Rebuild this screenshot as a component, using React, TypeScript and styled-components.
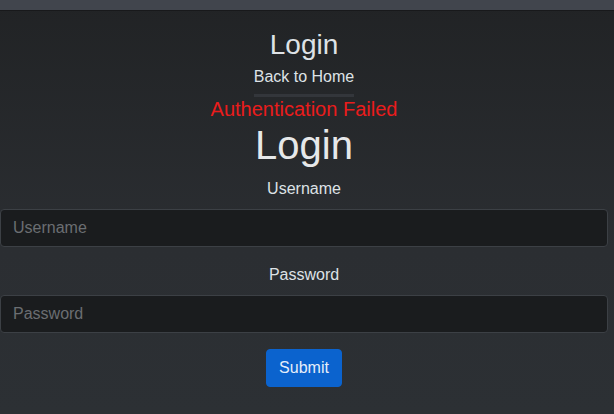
import styled, { createGlobalStyle } from 'styled-components'

const GlobalStyle = createGlobalStyle`
  html, body {
    margin: 0;
    padding: 0;
  }

  body {
    width: 614px;
    height: 414px;
    overflow: hidden;
    background: linear-gradient(180deg, #212325 0%, #2b2e32 60%, #2c3034 100%);
    font-family: "Liberation Sans", Arial, sans-serif;
    color: #dee2e6;
  }
`

export default function App (): JSX.Element {
  return (
    <>
      <GlobalStyle />
      <TopBar />
      <PageStyledContainer>
        <PageTitle>Login</PageTitle>
        <HomeLink href='#'>Back to Home</HomeLink>
        <Divider />
        <ErrorText>Authentication Failed</ErrorText>
        <FormTitle>Login</FormTitle>
        <LoginForm onSubmit={(e) => e.preventDefault()}>
          <Field>
            <Label htmlFor='username'>Username</Label>
            <Input id='username' type='text' placeholder='Username' />
          </Field>
          <Field>
            <Label htmlFor='password'>Password</Label>
            <Input id='password' type='password' placeholder='Password' />
          </Field>
          <SubmitButton type='submit'>Submit</SubmitButton>
        </LoginForm>
      </PageStyledContainer>
    </>
  )
}

const TopBar = styled.div`
  height: 10px;
  background: #41454d;
  border-bottom: 1px solid #18191b;
`

const PageStyledContainer = styled.div`
  display: flex;
  flex-direction: column;
  align-items: center;

  width: 608px;
  padding-top: 17px;
`

const PageTitle = styled.h3`
  margin: 0 0 3px;
  font-size: 28px;
  font-weight: 400;
  line-height: 1.2;
  color: #dee2e6;
`

const HomeLink = styled.a`
  font-size: 16px;
  line-height: 24px;
  color: #dee2e6;
  text-decoration: none;
`

const Divider = styled.div`
  width: 100px;
  height: 3px;
  margin-top: 5px;
  background: #33363b;
`

const ErrorText = styled.h5`
  margin: 0;
  font-size: 20px;
  font-weight: 400;
  line-height: 24px;
  color: #ea1c1c;
`

const FormTitle = styled.h1`
  margin: 0 0 7px;
  font-size: 40px;
  font-weight: 400;
  line-height: 48px;
  color: #e6e8ea;
`

const LoginForm = styled.form`
  display: flex;
  flex-direction: column;
  align-items: center;
  gap: 15px;

  width: 100%;
`

const Field = styled.div`
  display: flex;
  flex-direction: column;
  align-items: center;
  gap: 8px;

  width: 100%;
`

const Label = styled.label`
  margin-top: 1px;
  font-size: 16px;
  line-height: 24px;
  color: #dee2e6;
`

const Input = styled.input`
  box-sizing: border-box;
  width: 100%;
  height: 38px;
  padding: 6px 12px;
  border: 1px solid #3c4045;
  border-radius: 4px;

  background: #1a1c1e;
  font-family: "Liberation Sans", Arial, sans-serif;
  font-size: 16px;
  color: #dee2e6;
  outline: none;

  &::placeholder {
    color: #6b6e72;
  }
`

const SubmitButton = styled.button`
  height: 38px;
  margin-top: 1px;
  padding: 6px 12px;
  border: 1px solid #0b63ce;
  border-radius: 4px;

  background: #0b63ce;
  font-family: "Liberation Sans", Arial, sans-serif;
  font-size: 16px;
  line-height: 24px;
  color: #e6eefa;
  cursor: pointer;
`
